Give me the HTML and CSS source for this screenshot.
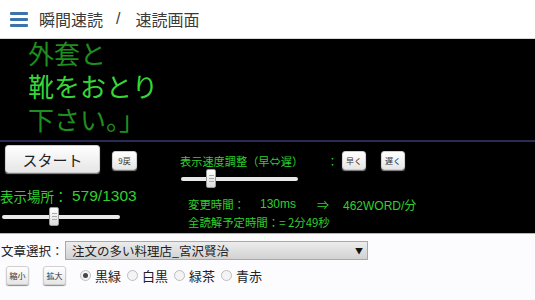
FILE: index.html
```html
<!DOCTYPE html>
<html lang="ja">
<head>
<meta charset="utf-8">
<link rel="stylesheet" href="styles.css">
</head>
<body>
<header class="header">
  <div class="burger"><span></span><span></span><span></span></div>
  <div class="crumb">瞬間速読</div>
  <div class="sep">/</div>
  <div class="crumb">速読画面</div>
</header>
<main class="panel">
  <section class="display">
    <div class="lines">
      <div class="line dim">外套と</div>
      <div class="line hi">靴をおとり</div>
      <div class="line dim">下さい。」</div>
    </div>
  </section>
  <section class="controls">
    <div class="col-left">
      <div class="start-row">
        <button class="btn btn-start">スタート</button>
        <button class="btn btn-mini btn-back">9戻</button>
      </div>
      <div class="pos-row"><span class="pos-label">表示場所：</span><span class="pos-num">579/1303</span></div>
      <div class="slider slider-left"><div class="track"></div><div class="thumb" style="left:47px"><i></i><i></i><i></i></div></div>
    </div>
    <div class="col-right">
      <div class="speed-row">
        <span class="speed-label">表示速度調整（早⇔遅）</span>
        <span class="colon">：</span>
        <button class="btn btn-mini btn-fast">早く</button>
        <button class="btn btn-mini btn-slow">遅く</button>
      </div>
      <div class="slider slider-right"><div class="track"></div><div class="thumb" style="left:25px"><i></i><i></i><i></i></div></div>
      <div class="info info1"><span class="i-label">変更時間：</span><span class="i-ms">130ms</span><span class="i-arrow">⇒</span><span class="i-wpm">462WORD/分</span></div>
      <div class="info info2">全読解予定時間：= 2分49秒</div>
    </div>
  </section>
</main>
<section class="bottom">
  <div class="select-row">
    <span class="select-label">文章選択：</span>
    <div class="select"><span class="select-text">注文の多い料理店_宮沢賢治</span><span class="caret">▼</span></div>
  </div>
  <div class="opt-row">
    <button class="btn btn-mini btn-zoom">縮小</button>
    <button class="btn btn-mini btn-zoom btn-zoom2">拡大</button>
    <label class="radio checked"><span class="dot"></span>黒緑</label>
    <label class="radio"><span class="dot"></span>白黒</label>
    <label class="radio"><span class="dot"></span>緑茶</label>
    <label class="radio"><span class="dot"></span>青赤</label>
  </div>
</section>
</body>
</html>
```
FILE: styles.css
```css
* { box-sizing: border-box; }
html, body { margin: 0; padding: 0; }
body {
  width: 535px;
  height: 300px;
  overflow: hidden;
  background: #fcfbfe;
  font-family: "Noto Sans CJK JP", "Liberation Sans", sans-serif;
}
.header {
  height: 39px;
  background: #ffffff;
  border-bottom: 1px solid #d9d9dc;
  display: flex;
  align-items: center;
  padding-left: 10px;
  color: #3a3a3a;
  font-size: 16px;
}
.burger {
  width: 18px;
  display: flex;
  flex-direction: column;
  gap: 3px;
  margin-right: 11px;
  margin-top: 1px;
}
.burger span {
  display: block;
  height: 3px;
  background: #3d72ad;
  border-radius: 1px;
}
.crumb { line-height: 20px; }
.sep { margin: 0 15px 0 13px; font-family: "Liberation Sans", sans-serif; }

.panel { background: #000; }
.display {
  height: 103px;
  overflow: hidden;
  border-bottom: 2px solid #2b2b55;
  padding-left: 28px;
}
.lines { margin-top: -3px; }
.line {
  font-size: 26px;
  line-height: 33px;
  height: 33px;
  white-space: nowrap;
}
.dim { color: #1e8e1e; }
.hi { color: #36d636; }

.controls {
  height: 92px;
  display: flex;
  color: #2fd02f;
  border-bottom: 1px solid #b6b0cc;
}
.col-left { width: 180px; padding-top: 3px; }
.col-right { flex: 1; padding-top: 9px; }

.btn {
  font-family: "Noto Sans CJK JP", sans-serif;
  border: 1px solid #cfcfcf;
  border-radius: 3px;
  background: linear-gradient(#ffffff, #e6e6e6);
  box-shadow: 0 1px 1px #8a8a8a;
  color: #333;
  padding: 0;
  cursor: pointer;
}
.start-row { display: flex; align-items: center; padding-left: 5px; }
.btn-start {
  width: 95px;
  height: 28px;
  font-size: 15px;
  color: #222;
}
.btn-mini {
  width: 24px;
  height: 19px;
  font-size: 8px;
  line-height: 17px;
}
.btn-back { margin-left: 12px; margin-top: 3px; width: 25px; }
.pos-row {
  margin-top: 12px;
  height: 22px;
  display: flex;
  align-items: center;
  white-space: nowrap;
}
.pos-label { font-size: 13.5px; width: 72px; }
.pos-num { font-size: 15.5px; font-family: "Liberation Sans", sans-serif; }

.slider { position: relative; height: 20px; }
.slider-left { width: 118px; margin-left: 2px; margin-top: 0px; }
.slider-right { width: 117px; margin-left: 1px; margin-top: 0px; }
.track {
  position: absolute;
  left: 0; right: 0;
  top: 8px;
  height: 4px;
  background: #e8e8e8;
  border-radius: 2px;
}
.thumb {
  position: absolute;
  top: 0;
  width: 10px;
  height: 19px;
  background: linear-gradient(#ffffff, #dcdcdc);
  border: 1px solid #9a9a9a;
  border-radius: 2px;
  display: flex;
  flex-direction: column;
  align-items: center;
  justify-content: center;
  gap: 2px;
}
.thumb i { display: block; width: 5px; height: 1px; background: #aaa; }

.speed-row {
  display: flex;
  align-items: center;
  height: 19px;
  white-space: nowrap;
}
.speed-label { font-size: 11.2px; width: 147px; }
.colon { font-size: 11px; width: 15px; }
.btn-fast { margin-left: 0; }
.btn-slow { margin-left: 15px; }
.slider-right { margin-top: -1px; }
.info {
  font-size: 11.4px;
  white-space: nowrap;
  padding-left: 8px;
  display: flex;
  align-items: center;
  height: 18px;
}
.info1 { margin-top: 6px; }
.i-label { width: 72px; }
.i-ms { width: 57px; font-family: "Liberation Sans", sans-serif; font-size: 12px; }
.i-arrow { width: 26px; font-size: 12px; }
.i-wpm { font-family: "Liberation Sans", "Noto Sans CJK JP", sans-serif; font-size: 12px; }

.bottom { color: #222; padding-top: 7px; }
.select-row { display: flex; align-items: center; height: 19px; }
.select-label { font-size: 12.5px; width: 65px; padding-left: 1px; }
.select {
  width: 303px;
  height: 19px;
  border: 1px solid #a8a8a8;
  background: linear-gradient(#ececec, #d2d2d2);
  display: flex;
  align-items: center;
  justify-content: space-between;
  padding: 0 4px 0 6px;
  font-size: 12.5px;
}
.caret { font-size: 8px; color: #111; }
.opt-row {
  display: flex;
  align-items: center;
  margin-top: 6px;
  padding-left: 6px;
  font-size: 13px;
}
.btn-zoom { width: 23px; height: 19px; }
.btn-zoom2 { margin-left: 14px; }
.radio { display: flex; align-items: center; margin-right: 6px; }
.btn-zoom2 + .radio { margin-left: 14px; }
.dot {
  width: 11px; height: 11px;
  border-radius: 50%;
  border: 1px solid #bdbdbd;
  background: #f4f4f4;
  margin-right: 4px;
  position: relative;
}
.checked .dot::after {
  content: "";
  position: absolute;
  left: 2px; top: 2px;
  width: 5px; height: 5px;
  border-radius: 50%;
  background: #444;
}
```
